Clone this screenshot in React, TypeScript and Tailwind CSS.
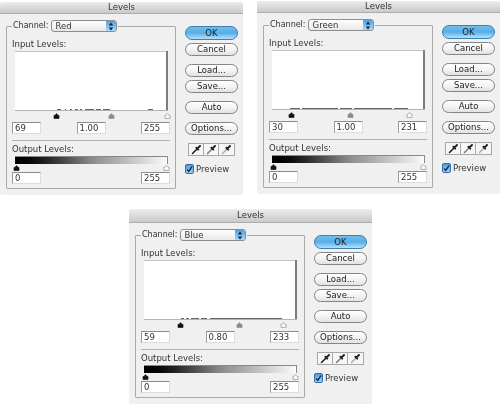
import React from 'react';

type Seg = [number, number];

const Slider = ({ tone, x }: { tone: 'black' | 'gray' | 'white'; x: number }) => {
  const fill = tone === 'black' ? '#111' : tone === 'gray' ? '#8a8a8a' : '#fff';
  const stroke = tone === 'white' ? '#8c8c8c' : fill;
  return (
    <svg className="absolute top-px" style={{ left: x - 3 }} width="7" height="6" viewBox="0 0 7 6">
      <path d="M3.5 .6 L5 2.4 H6 V5.4 H1 V2.4 H2 Z" fill={fill} stroke={stroke} strokeWidth="0.7" />
    </svg>
  );
};

const Field = ({ value }: { value: string }) => (
  <input
    readOnly
    value={value}
    className="w-[29px] h-[12px] bg-white border border-t-[#8c8c8c] border-l-[#9a9a9a] border-r-[#dcdcdc] border-b-[#dcdcdc] pl-[2px] text-[8.5px] leading-none text-[#333] outline-none"
  />
);

const PushButton = ({ label, primary, className }: { label: string; primary?: boolean; className?: string }) => (
  <button
    className={
      'w-[53px] h-[13px] rounded-full border flex items-center justify-center text-[8.5px] leading-none text-[#222] ' +
      (primary
        ? 'border-[#3f7fb0] bg-gradient-to-b from-[#6fbdee] via-[#57aee8] to-[#b4e0f8] '
        : 'border-[#858585] bg-gradient-to-b from-[#ffffff] via-[#f4f4f4] to-[#e2e2e2] ') +
      (className ?? '')
    }
  >
    {label}
  </button>
);

const Dropper = ({ tint }: { tint: string }) => (
  <div className="w-[15px] h-[11px] flex items-center justify-center border-r border-[#a8a8a8] last:border-r-0">
    <svg width="11" height="11" viewBox="0 0 11 11">
      <path d="M1.5 9.5 L6 5" stroke={tint} strokeWidth="1.5" strokeLinecap="round" />
      <path d="M5.4 3.8 L7.2 5.6 M6.6 4.4 L9 2" stroke="#222" strokeWidth="2" strokeLinecap="round" />
    </svg>
  </div>
);

const Histogram = ({ segs }: { segs: Seg[] }) => (
  <svg width="153" height="60" viewBox="0 0 153 60" className="block ml-[8px] mt-[2px]">
    <rect x="0" y="0" width="153" height="60" fill="#fff" />
    <rect x="0" y="0" width="153" height="1" fill="#c4c4c4" />
    <rect x="151" y="0" width="2" height="59" fill="#7d7d7d" />
    <rect x="0" y="59" width="153" height="1" fill="#b4b4b4" />
    {segs.map(([x, w], i) => (
      <rect key={i} x={x} y="58" width={w} height="1" fill="#666" />
    ))}
  </svg>
);

const Levels = ({
  channel,
  input,
  marks,
  segs,
  tall,
  className,
}: {
  channel: string;
  input: [string, string, string];
  marks: [number, number, number];
  segs: Seg[];
  tall?: boolean;
  className?: string;
}) => (
  <div className={'w-[243px] bg-[#f0f0f0] rounded-t-[3px] rounded-b-[2px] ' + (className ?? '')}>
    <div
      className={
        'flex items-center justify-center bg-gradient-to-b from-[#ececec] to-[#cacaca] border-b border-[#adadad] rounded-t-[3px] text-[8.5px] leading-none text-[#333] ' +
        (tall ? 'h-[14px]' : 'h-[12px]')
      }
    >
      Levels
    </div>
    <div className="flex pl-[6px] pt-[6px] pb-[6px]">
      <fieldset className="w-[170px] border border-[#a9a9a9] rounded-[1px] h-[169px]">
        <legend className="ml-[5px] px-px flex items-center gap-[2px] h-[12px]">
          <span className="text-[8px]">Channel:</span>
          <div className="w-[66px] h-[12px] flex rounded-[3px] border border-[#8d8d8d] bg-gradient-to-b from-[#ffffff] to-[#e8e8e8] overflow-hidden">
            <span className="flex-1 pl-[4px] leading-[10px]">{channel}</span>
            <div className="w-[10px] bg-gradient-to-b from-[#4f9fe4] to-[#a6d8f8] flex items-center justify-center">
              <svg width="6" height="9" viewBox="0 0 6 9">
                <path d="M3 .5 L5.2 3.4 H.8 Z M3 8.5 L.8 5.6 H5.2 Z" fill="#10233a" />
              </svg>
            </div>
          </div>
        </legend>
        <div className="pl-[5px] pt-[7px] leading-[10px]">Input Levels:</div>
        <Histogram segs={segs} />
        <div className="relative h-[8px] ml-[8px] mt-[1px]">
          <Slider tone="black" x={marks[0]} />
          <Slider tone="gray" x={marks[1]} />
          <Slider tone="white" x={marks[2]} />
        </div>
        <div className="flex justify-between px-[5px] mt-[2px]">
          <Field value={input[0]} />
          <Field value={input[1]} />
          <Field value={input[2]} />
        </div>
        <div className="h-px bg-[#b0b0b0] mx-[5px] mt-[6px]" />
        <div className="pl-[5px] pt-[3px] leading-[10px]">Output Levels:</div>
        <div className="ml-[8px] mt-[2px] w-[153px] h-[8px] border-t border-r border-t-[#888] border-r-[#8a8a8a] bg-gradient-to-r from-[#000000] via-[#8a8a8a] to-[#fbfbfb]" />
        <div className="relative h-[8px] ml-[8px]">
          <Slider tone="black" x={1} />
          <Slider tone="white" x={151} />
        </div>
        <div className="flex justify-between px-[5px]">
          <Field value="0" />
          <Field value="255" />
        </div>
      </fieldset>
      <div className="flex flex-col ml-[9px] pt-[6px]">
        <PushButton label="OK" primary className="h-[14px]" />
        <PushButton label="Cancel" className="mt-[3px]" />
        <PushButton label="Load..." className="mt-[8px]" />
        <PushButton label="Save..." className="mt-[3px]" />
        <PushButton label="Auto" className="mt-[8px]" />
        <PushButton label="Options..." className="mt-[8px]" />
        <div className="flex self-start ml-[3px] mt-[8px] border border-[#a8a8a8] bg-[#f6f6f6] h-[13px] w-[47px]">
          <Dropper tint="#111" />
          <Dropper tint="#777" />
          <Dropper tint="#aaa" />
        </div>
        <div className="flex items-center gap-[2px] mt-[7px]">
          <div className="w-[9px] h-[10px] rounded-[2px] border border-[#2f6ea8] bg-gradient-to-b from-[#4c9be0] to-[#9bd0f4] flex items-center justify-center">
            <svg width="9" height="9" viewBox="0 0 9 9">
              <path d="M1.5 4.5 L3.6 7 L7.8 .6" fill="none" stroke="#10233a" strokeWidth="1.6" />
            </svg>
          </div>
          <span>Preview</span>
        </div>
      </div>
    </div>
  </div>
);

export default function App() {
  return (
    <div
      className="w-[500px] h-[405px] bg-white overflow-hidden pt-px text-[8.5px] text-[#333] blur-[0.5px]"
      style={{ fontFamily: '"DejaVu Sans", sans-serif' }}
    >
      <div className="flex justify-between items-start">
        <Levels
          className="mt-px"
          channel="Red"
          input={['69', '1.00', '255']}
          marks={[41, 96, 152]}
          segs={[[42, 4], [50, 1], [55, 2], [60, 3], [65, 2], [70, 9], [81, 5], [88, 7], [133, 5]]}
        />
        <Levels
          channel="Green"
          input={['30', '1.00', '231']}
          marks={[19, 78, 137]}
          segs={[[18, 10], [30, 36], [68, 12], [82, 38], [122, 14]]}
        />
      </div>
      <div className="flex mt-[14px] ml-[129px]">
        <Levels
          tall
          channel="Blue"
          input={['59', '0.80', '233']}
          marks={[36, 95, 139]}
          segs={[[37, 3], [42, 3], [47, 8], [57, 6], [66, 72]]}
        />
      </div>
    </div>
  );
}
